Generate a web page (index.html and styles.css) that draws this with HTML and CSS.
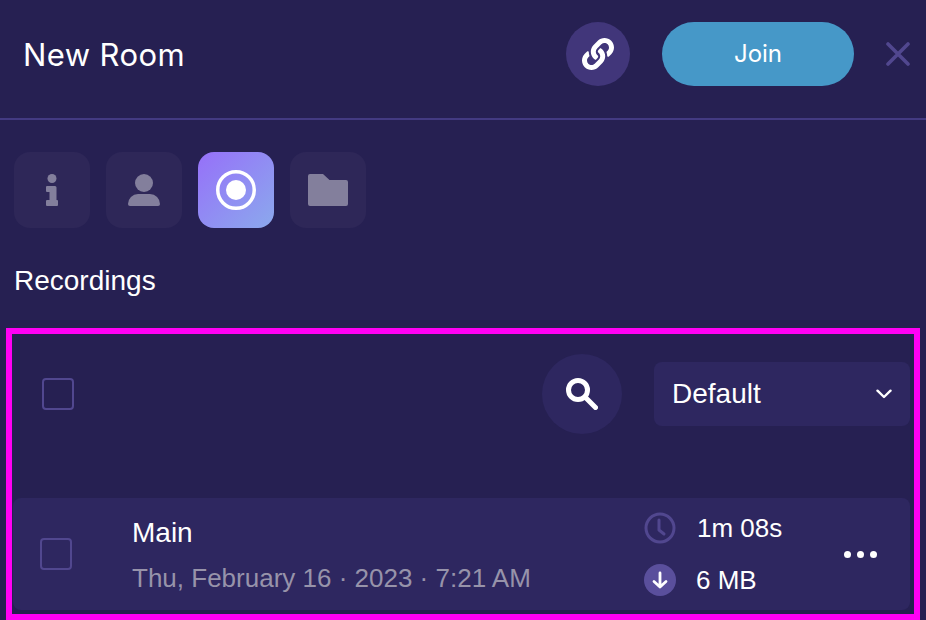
FILE: index.html
```html
<!DOCTYPE html>
<html lang="en">
<head>
<meta charset="utf-8">
<title>New Room</title>
<link rel="stylesheet" href="styles.css">
</head>
<body>
<header class="header">
  <h1 class="title">New Room</h1>
  <button class="link-btn" aria-label="Copy link">
    <svg width="32" height="32" viewBox="0 0 512 512" fill="#fff"><path d="M326.612 185.391c59.747 59.809 58.927 155.698.36 214.59-.11.12-.24.25-.36.37l-67.2 67.2c-59.27 59.27-155.699 59.262-214.96 0-59.27-59.26-59.27-155.7 0-214.96l37.106-37.106c9.84-9.84 26.786-3.3 27.294 10.606.648 17.722 3.826 35.527 9.69 52.721 1.986 5.822.567 12.262-3.783 16.612l-13.087 13.087c-28.026 28.026-28.905 73.66-1.155 101.96 28.024 28.579 74.086 28.749 102.325.51l67.2-67.19c28.191-28.191 28.073-73.757 0-101.83-3.701-3.694-7.429-6.564-10.341-8.569a16.037 16.037 0 0 1-6.947-12.606c-.396-10.567 3.348-21.456 11.698-29.806l21.054-21.055c5.521-5.521 14.182-6.199 20.584-1.731a152.482 152.482 0 0 1 20.522 17.197zM467.547 44.449c-59.261-59.262-155.69-59.27-214.96 0l-67.2 67.2c-.12.12-.25.25-.36.37-58.566 58.892-59.387 154.781.36 214.59a152.454 152.454 0 0 0 20.521 17.196c6.402 4.468 15.064 3.789 20.584-1.731l21.054-21.055c8.35-8.35 12.094-19.239 11.698-29.806a16.037 16.037 0 0 0-6.947-12.606c-2.912-2.005-6.64-4.875-10.341-8.569-28.073-28.073-28.191-73.639 0-101.83l67.2-67.19c28.239-28.239 74.3-28.069 102.325.51 27.75 28.3 26.872 73.934-1.155 101.96l-13.087 13.087c-4.35 4.35-5.769 10.79-3.783 16.612 5.864 17.194 9.042 34.999 9.69 52.721.509 13.906 17.454 20.446 27.294 10.606l37.106-37.106c59.271-59.259 59.271-155.699.001-214.959z"/></svg>
  </button>
  <button class="join">Join</button>
  <button class="close" aria-label="Close">
    <svg width="24" height="24" viewBox="0 0 24 24" fill="none" stroke="#51478f" stroke-width="3.600" stroke-linecap="round"><path d="M2 2l20 20M22 2L2 22"/></svg>
  </button>
</header>

<nav class="tabs">
  <div class="tab">
    <svg width="12" height="32" viewBox="0 0 12 32" fill="#837f9c"><circle cx="6" cy="4.500" r="4.500"/><path d="M1 12h8a1.500 1.500 0 0 1 1.500 1.500V26h.5a1 1 0 0 1 1 1v4a1 1 0 0 1-1 1H1a1 1 0 0 1-1-1v-4a1 1 0 0 1 1-1h2.500v-8H1a1 1 0 0 1-1-1v-4a1 1 0 0 1 1-1z"/></svg>
  </div>
  <div class="tab">
    <svg width="32" height="32" viewBox="0 0 32 32" fill="#837f9c"><circle cx="16" cy="9" r="9"/><path d="M10 20h12a10 10 0 0 1 10 10a2 2 0 0 1-2 2H2a2 2 0 0 1-2-2a10 10 0 0 1 10-10z"/></svg>
  </div>
  <div class="tab tab-active">
    <svg width="40" height="40" viewBox="0 0 40 40"><circle cx="20" cy="20" r="18.250" fill="none" stroke="#fff" stroke-width="3.500"/><circle cx="20" cy="20" r="10" fill="#fff"/></svg>
  </div>
  <div class="tab">
    <svg width="40" height="32" viewBox="0 0 40 32" fill="#837f9c"><path d="M2 0h13l6.500 6H38a2 2 0 0 1 2 2v22a2 2 0 0 1-2 2H2a2 2 0 0 1-2-2V2a2 2 0 0 1 2-2z"/></svg>
  </div>
</nav>

<h2 class="section-title">Recordings</h2>

<section class="recordings">
  <div class="toolbar">
    <span class="checkbox"></span>
    <button class="search" aria-label="Search">
      <svg width="32" height="32" viewBox="0 0 32 32" fill="none" stroke="#fff" stroke-linecap="round"><circle cx="12" cy="12" r="9.500" stroke-width="5"/><path d="M20.500 20.500L29.500 29.500" stroke-width="5"/></svg>
    </button>
    <div class="select">
      <span>Default</span>
      <svg width="16" height="10" viewBox="0 0 16 10" fill="none" stroke="#fff" stroke-width="2.400" stroke-linecap="round" stroke-linejoin="round"><path d="M1.500 1.700L8 8l6.500-6.300"/></svg>
    </div>
  </div>
  <article class="row">
    <span class="checkbox"></span>
    <div class="info">
      <div class="name">Main</div>
      <div class="date">Thu, February 16 · 2023 · 7:21 AM</div>
    </div>
    <div class="meta">
      <div class="meta-item">
        <svg width="32" height="32" viewBox="0 0 32 32" fill="none" stroke="#51478f" stroke-width="3" stroke-linecap="round" stroke-linejoin="round"><circle cx="16" cy="16" r="14"/><path d="M15 8v10l5 4"/></svg>
        <span class="time">1m 08s</span>
      </div>
      <div class="meta-item">
        <svg width="32" height="32" viewBox="0 0 32 32" fill="none"><circle cx="16" cy="16" r="16" fill="#5a4f9c"/><path d="M16 9v14M10 17.500L16 23l6-5.500" stroke="#fff" stroke-width="2.800" stroke-linecap="round" stroke-linejoin="round"/></svg>
        <span class="size">6 MB</span>
      </div>
    </div>
    <button class="more" aria-label="More"><i></i><i></i><i></i></button>
  </article>
</section>
</body>
</html>
```

FILE: styles.css
```css
* { box-sizing: border-box; }
html, body { height: 100%; }
body {
  margin: 0;
  width: 926px;
  height: 620px;
  overflow: hidden;
  background: #262052;
  color: #fff;
  font-family: "Liberation Sans", Arial, sans-serif;
}
button { border: 0; padding: 0; font: inherit; color: inherit; background: none; }
svg { display: block; flex: none; }

.header {
  display: flex;
  align-items: center;
  height: 120px;
  padding: 22px 16px 32px 23px;
  border-bottom: 2px solid #433a82;
}
.title {
  flex: 1;
  margin: 0;
  font: 400 31px/1 Inter, sans-serif;
  letter-spacing: 0.4px;
}
.link-btn {
  display: flex;
  align-items: center;
  justify-content: center;
  width: 64px;
  height: 64px;
  border-radius: 50%;
  background: #41367a;
}
.join {
  width: 192px;
  height: 64px;
  margin-left: 32px;
  border-radius: 32px;
  background: #4698c8;
  font: 400 24px/1 Inter, sans-serif;
}
.close { margin-left: 32px; }

.tabs {
  display: flex;
  gap: 16px;
  padding: 32px 0 0 14px;
}
.tab {
  display: flex;
  align-items: center;
  justify-content: center;
  width: 76px;
  height: 76px;
  border-radius: 16px;
  background: #2e2758;
}
.tab-active { background: linear-gradient(135deg, #9670f9 0%, #8ba9ed 100%); }

.section-title {
  margin: 37px 0 0 14px;
  font-size: 28px;
  font-weight: 400;
  line-height: 32px;
}

.recordings {
  display: flex;
  flex-direction: column;
  height: 292px;
  margin: 31px 6px 0;
  padding: 20px 4px 4px 1px;
  border: 6px solid #ff00f5;
}
.toolbar {
  display: flex;
  align-items: center;
  height: 80px;
}
.checkbox {
  flex: none;
  width: 32px;
  height: 32px;
  border: 2px solid #51478f;
  border-radius: 4px;
}
.toolbar .checkbox { margin-left: 29px; }
.search {
  display: flex;
  align-items: center;
  justify-content: center;
  width: 80px;
  height: 80px;
  margin-left: auto;
  border-radius: 50%;
  background: #2e2760;
}
.select {
  display: flex;
  align-items: center;
  justify-content: space-between;
  width: 256px;
  height: 64px;
  margin-left: 32px;
  padding: 0 18px;
  border-radius: 8px;
  background: #2e2760;
  font-size: 28px;
}
.row {
  display: flex;
  align-items: center;
  height: 112px;
  margin-top: 64px;
  padding-left: 27px;
  border-radius: 8px;
  background: #2e2760;
}
.info {
  flex: 1;
  margin-left: 60px;
  padding-top: 2px;
}
.name { font-size: 28px; line-height: 32px; }
.date {
  margin-top: 13px;
  font-size: 26px;
  line-height: 32px;
  color: #9793aa;
}
.meta {
  display: flex;
  flex-direction: column;
  gap: 20px;
  width: 200px;
}
.meta-item {
  display: flex;
  align-items: center;
  gap: 21px;
  height: 32px;
  font-size: 26px;
}
.size { margin-left: -1px; }
.more {
  display: flex;
  gap: 6px;
  margin-right: 33px;
}
.more i {
  width: 7px;
  height: 7px;
  border-radius: 50%;
  background: #fff;
}
```
